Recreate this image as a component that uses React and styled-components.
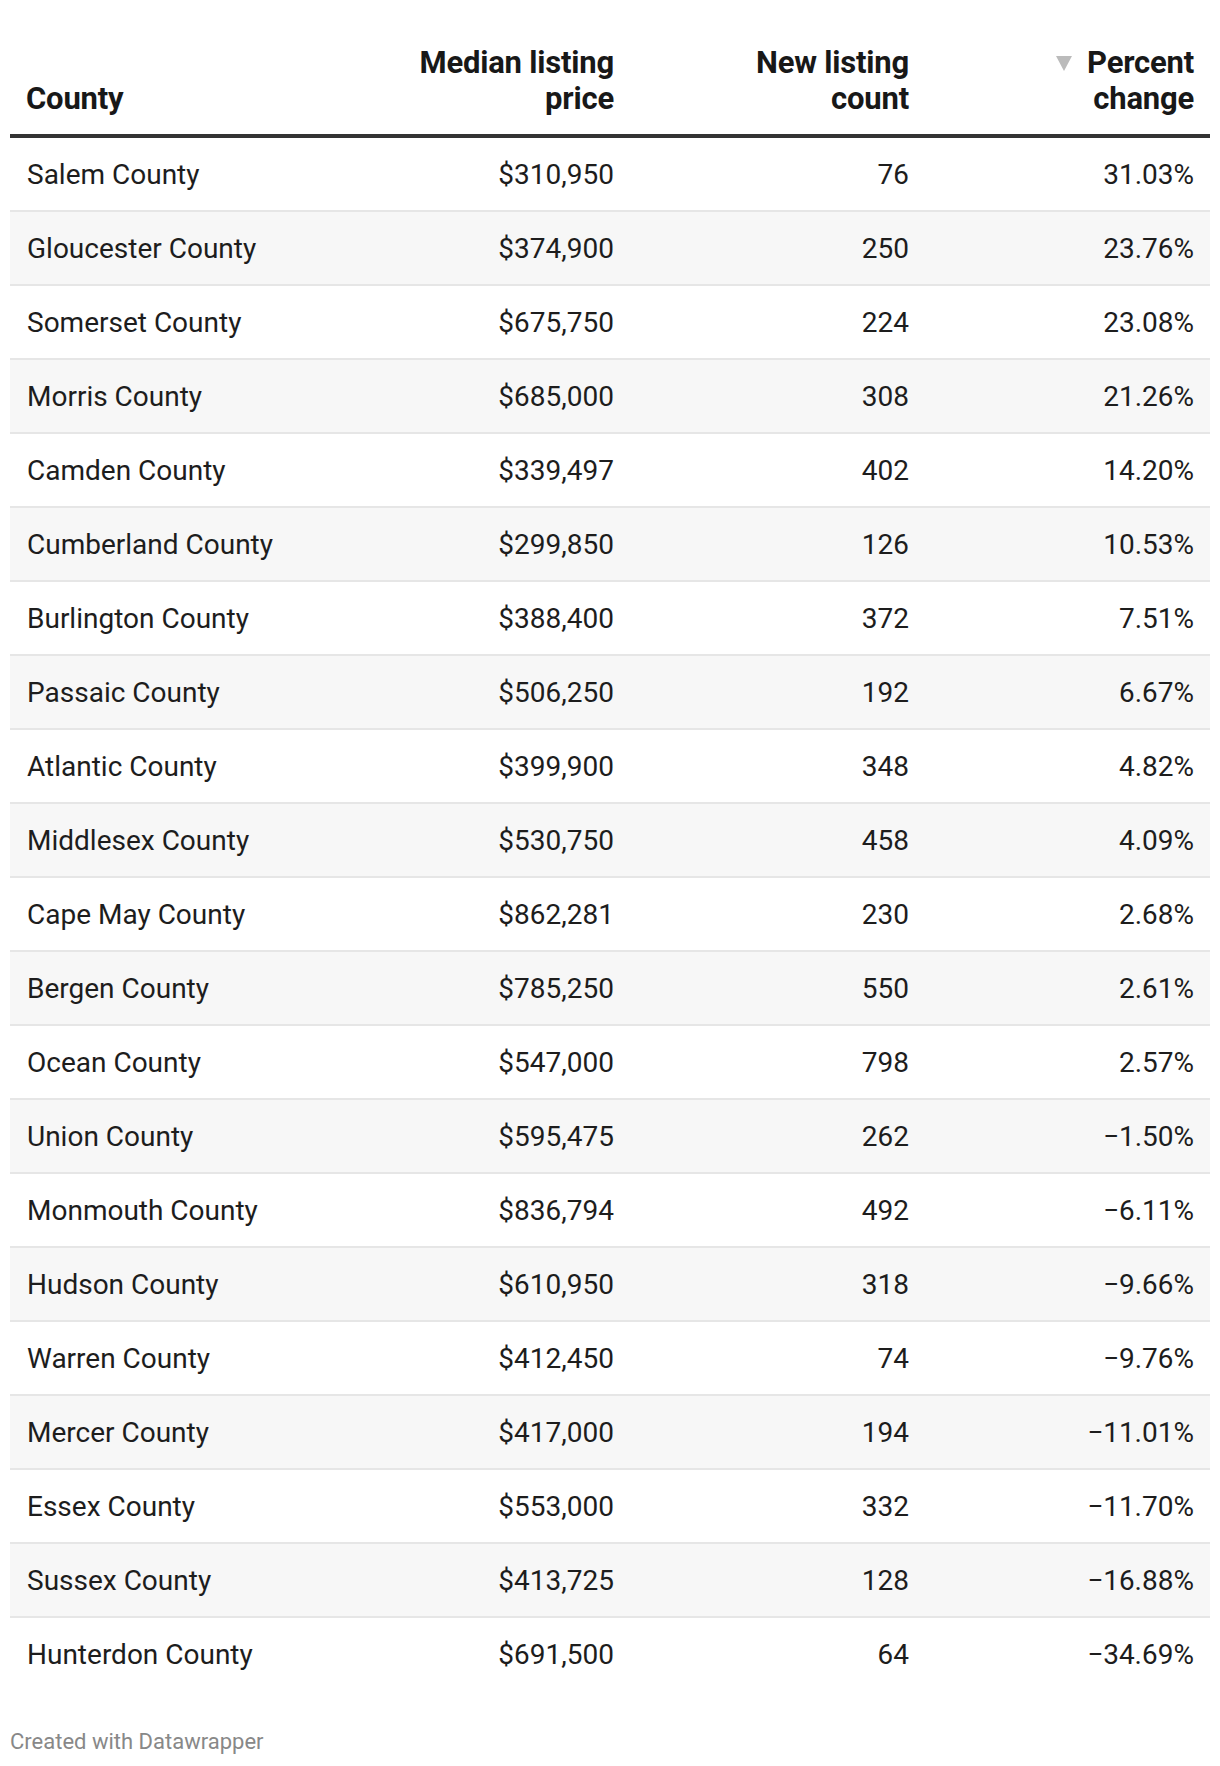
import React from 'react'
import styled, { createGlobalStyle } from 'styled-components'

const rows = [
  ['Salem County', '$310,950', '76', '31.03%'],
  ['Gloucester County', '$374,900', '250', '23.76%'],
  ['Somerset County', '$675,750', '224', '23.08%'],
  ['Morris County', '$685,000', '308', '21.26%'],
  ['Camden County', '$339,497', '402', '14.20%'],
  ['Cumberland County', '$299,850', '126', '10.53%'],
  ['Burlington County', '$388,400', '372', '7.51%'],
  ['Passaic County', '$506,250', '192', '6.67%'],
  ['Atlantic County', '$399,900', '348', '4.82%'],
  ['Middlesex County', '$530,750', '458', '4.09%'],
  ['Cape May County', '$862,281', '230', '2.68%'],
  ['Bergen County', '$785,250', '550', '2.61%'],
  ['Ocean County', '$547,000', '798', '2.57%'],
  ['Union County', '$595,475', '262', '\u22121.50%'],
  ['Monmouth County', '$836,794', '492', '\u22126.11%'],
  ['Hudson County', '$610,950', '318', '\u22129.66%'],
  ['Warren County', '$412,450', '74', '\u22129.76%'],
  ['Mercer County', '$417,000', '194', '\u221211.01%'],
  ['Essex County', '$553,000', '332', '\u221211.70%'],
  ['Sussex County', '$413,725', '128', '\u221216.88%'],
  ['Hunterdon County', '$691,500', '64', '\u221234.69%'],
]

function App() {
  return (
    <Page>
      <GlobalStyle />
      <Table>
        <HeadRow>
          <HeadCell>County</HeadCell>
          <HeadCell $right>Median listing<br />price</HeadCell>
          <HeadCell $right>New listing<br />count</HeadCell>
          <HeadCell $right><SortArrow />Percent<br />change</HeadCell>
        </HeadRow>
        {rows.map((r, i) => (
          <Row key={r[0]} $shade={i % 2 === 1} $last={i === rows.length - 1}>
            <Cell>{r[0]}</Cell>
            <Cell $right>{r[1]}</Cell>
            <Cell $right>{r[2]}</Cell>
            <Cell $right>{r[3]}</Cell>
          </Row>
        ))}
      </Table>
      <Footer>Created with Datawrapper</Footer>
    </Page>
  )
}

export default App

const GlobalStyle = createGlobalStyle`
  body {
    margin: 0;
    background: #fff;
    font-family: Roboto, "Liberation Sans", sans-serif;
  }
`

const Page = styled.div`
  padding: 45px 10px 0 10px;
  color: #1d1d1d;
`

const Table = styled.div`
  width: 1200px;
`

const HeadRow = styled.div`
  display: grid;
  grid-template-columns: 310px 310px 295px 285px;
  align-items: end;
  padding-bottom: 17px;
  border-bottom: 4px solid #333;
`

const HeadCell = styled.div`
  font-size: 31px;
  line-height: 36px;
  font-weight: 700;
  letter-spacing: -0.2px;
  color: #181818;
  text-align: ${p => (p.$right ? 'right' : 'left')};
  padding: ${p => (p.$right ? '0 16px 0 0' : '0 0 0 16px')};
`

const SortArrow = styled.span`
  display: inline-block;
  width: 0;
  height: 0;
  border-left: 8px solid transparent;
  border-right: 8px solid transparent;
  border-top: 15px solid #bbb;
  margin-right: 15px;
  vertical-align: 2px;
`

const Row = styled.div`
  display: grid;
  grid-template-columns: 310px 310px 295px 285px;
  align-items: center;
  height: 72px;
  background: ${p => (p.$shade ? '#f7f7f7' : '#fff')};
  border-bottom: ${p => (p.$last ? 'none' : '2px solid #e6e6e6')};
`

const Cell = styled.div`
  font-size: 28px;
  line-height: 33px;
  font-variant-numeric: tabular-nums;
  text-align: ${p => (p.$right ? 'right' : 'left')};
  padding: ${p => (p.$right ? '0 16px 0 0' : '0 0 0 17px')};
`

const Footer = styled.div`
  margin-top: 40px;
  font-size: 22px;
  line-height: 24px;
  color: #888;
`
